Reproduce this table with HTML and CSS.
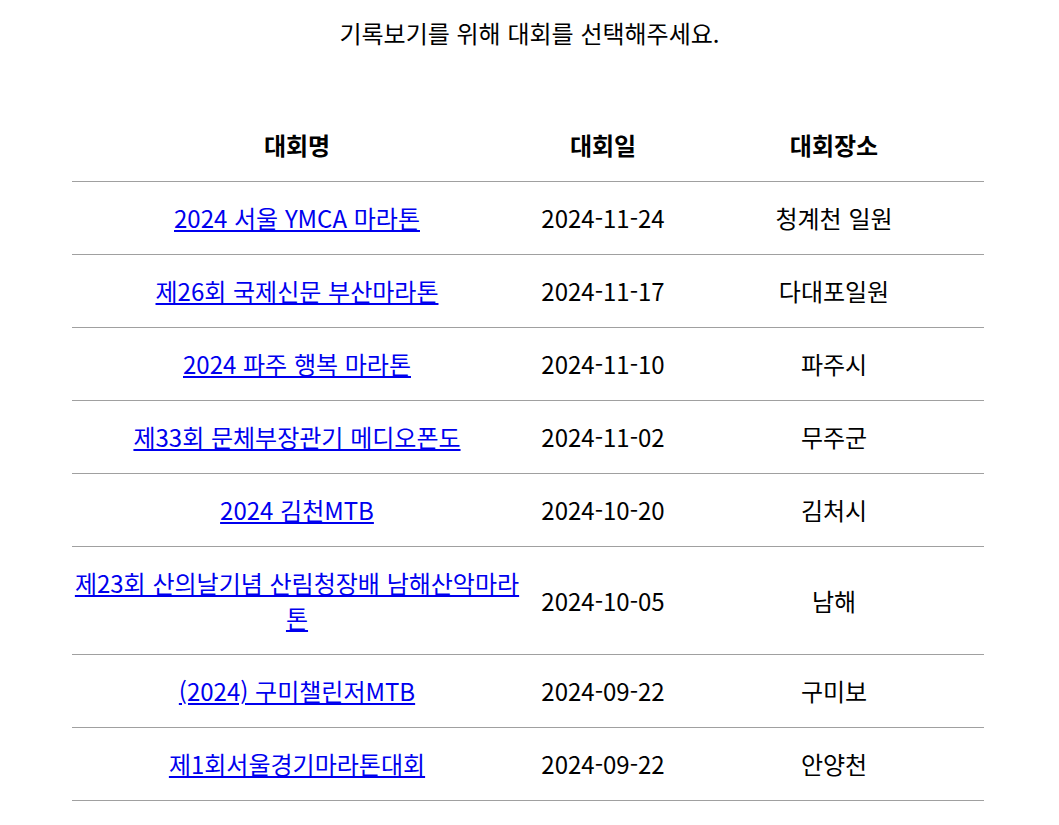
FILE: index.html
```html
<!DOCTYPE html>
<html lang="ko">
<head>
<meta charset="utf-8">
<title>대회 기록</title>
<link rel="stylesheet" href="styles.css">
</head>
<body>
<p class="intro">기록보기를 위해 대회를 선택해주세요.</p>
<table class="races">
  <thead>
    <tr><th class="c-name">대회명</th><th class="c-date">대회일</th><th class="c-place">대회장소</th></tr>
  </thead>
  <tbody>
    <tr><td><a href="#">2024 서울 YMCA 마라톤</a></td><td>2024-11-24</td><td>청계천 일원</td></tr>
    <tr><td><a href="#">제26회 국제신문 부산마라톤</a></td><td>2024-11-17</td><td>다대포일원</td></tr>
    <tr><td><a href="#">2024 파주 행복 마라톤</a></td><td>2024-11-10</td><td>파주시</td></tr>
    <tr><td><a href="#">제33회 문체부장관기 메디오폰도</a></td><td>2024-11-02</td><td>무주군</td></tr>
    <tr><td><a href="#">2024 김천MTB</a></td><td>2024-10-20</td><td>김처시</td></tr>
    <tr><td><a href="#">제23회 산의날기념 산림청장배 남해산악마라톤</a></td><td>2024-10-05</td><td>남해</td></tr>
    <tr><td><a href="#">(2024) 구미챌린저MTB</a></td><td>2024-09-22</td><td>구미보</td></tr>
    <tr><td><a href="#">제1회서울경기마라톤대회</a></td><td>2024-09-22</td><td>안양천</td></tr>
  </tbody>
</table>
</body>
</html>
```

FILE: styles.css
```css
html, body {
  margin: 0;
  padding: 0;
  background: #fff;
}
body {
  font-family: "Noto Sans CJK KR", "Noto Sans", sans-serif;
  color: #000;
}
.intro {
  margin: 0;
  padding-top: 18px;
  font-size: 24px;
  line-height: 30px;
  text-align: center;
}
.races {
  width: 912px;
  margin: 61px 0 0 72px;
  border-collapse: collapse;
  table-layout: fixed;
  font-size: 24px;
  line-height: 35px;
}
.c-name { width: 450px; }
.c-date { width: 162px; }
.c-place { width: 300px; }
.races th,
.races td {
  box-sizing: border-box;
  padding: 18px 1px 19px;
  text-align: center;
  vertical-align: middle;
  border-bottom: 1px solid #a0a0a0;
}
.races th {
  font-weight: 700;
}
.races a {
  color: #0000ee;
  text-decoration: underline;
}
```
